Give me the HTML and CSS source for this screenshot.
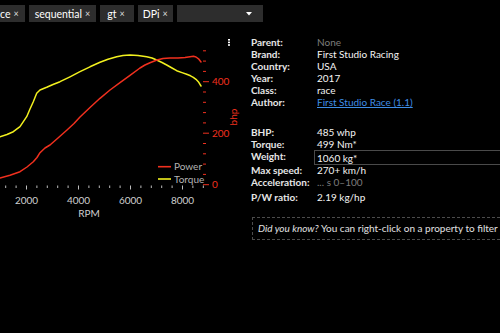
FILE: index.html
```html
<!DOCTYPE html>
<html>
<head>
<meta charset="utf-8">
<link rel="stylesheet" href="styles.css">
</head>
<body>
<div class="tags">
  <span class="tag tag-first">race <i>×</i></span>
  <span class="tag">sequential <i>×</i></span>
  <span class="tag tag-gt">gt <i>×</i></span>
  <span class="tag tag-dpi">DPi <i>×</i></span>
  <span class="select"><svg width="6" height="4" viewBox="0 0 6 4"><path d="M0 0H6L3 3.5Z" fill="#fff"/></svg></span>
</div>
<div class="main">
  <svg class="chart" width="246" height="194" viewBox="0 30 246 194">
    <g class="menu" fill="#fff">
      <rect x="228" y="39" width="2" height="1.6"/>
      <rect x="228" y="41.6" width="2" height="1.6"/>
      <rect x="228" y="44.2" width="2" height="1.6"/>
    </g>
    <g class="yticks" stroke="#f0301e" stroke-width="1">
      <line x1="203" y1="50.8" x2="206" y2="50.8"/>
      <line x1="203" y1="61.1" x2="206" y2="61.1"/>
      <line x1="203" y1="71.4" x2="206" y2="71.4"/>
      <line x1="203" y1="81.7" x2="209" y2="81.7"/>
      <line x1="203" y1="92" x2="206" y2="92"/>
      <line x1="203" y1="102.3" x2="206" y2="102.3"/>
      <line x1="203" y1="112.6" x2="206" y2="112.6"/>
      <line x1="203" y1="122.9" x2="206" y2="122.9"/>
      <line x1="203" y1="133.2" x2="209" y2="133.2"/>
      <line x1="203" y1="143.5" x2="206" y2="143.5"/>
      <line x1="203" y1="153.8" x2="206" y2="153.8"/>
      <line x1="203" y1="164.1" x2="206" y2="164.1"/>
      <line x1="203" y1="174.4" x2="206" y2="174.4"/>
      <line x1="203" y1="184.7" x2="209" y2="184.7"/>
    </g>
    <g class="ylabels">
      <text x="212" y="85.2">400</text>
      <text x="212" y="136.7">200</text>
      <text x="212" y="188.2">0</text>
      <text class="ytitle" x="0" y="0" transform="translate(237 117) rotate(-90)">bhp</text>
    </g>
    <g class="xticks" stroke="#bdbdbd" stroke-width="1">
      <line x1="5.7" y1="185.5" x2="5.7" y2="188"/>
      <line x1="16.1" y1="185.5" x2="16.1" y2="188"/>
      <line x1="26.5" y1="185.5" x2="26.5" y2="189.5"/>
      <line x1="36.9" y1="185.5" x2="36.9" y2="188"/>
      <line x1="47.3" y1="185.5" x2="47.3" y2="188"/>
      <line x1="57.7" y1="185.5" x2="57.7" y2="188"/>
      <line x1="68.1" y1="185.5" x2="68.1" y2="188"/>
      <line x1="78.5" y1="185.5" x2="78.5" y2="189.5"/>
      <line x1="88.9" y1="185.5" x2="88.9" y2="188"/>
      <line x1="99.3" y1="185.5" x2="99.3" y2="188"/>
      <line x1="109.7" y1="185.5" x2="109.7" y2="188"/>
      <line x1="120.1" y1="185.5" x2="120.1" y2="188"/>
      <line x1="130.5" y1="185.5" x2="130.5" y2="189.5"/>
      <line x1="140.9" y1="185.5" x2="140.9" y2="188"/>
      <line x1="151.3" y1="185.5" x2="151.3" y2="188"/>
      <line x1="161.7" y1="185.5" x2="161.7" y2="188"/>
      <line x1="172.1" y1="185.5" x2="172.1" y2="188"/>
      <line x1="182.5" y1="185.5" x2="182.5" y2="189.5"/>
      <line x1="192.9" y1="185.5" x2="192.9" y2="188"/>
      <line x1="203.3" y1="185.5" x2="203.3" y2="188"/>
    </g>
    <g class="xlabels">
      <text x="26.5" y="203.5">2000</text>
      <text x="78.5" y="203.5">4000</text>
      <text x="130.5" y="203.5">6000</text>
      <text x="182.5" y="203.5">8000</text>
      <text x="89" y="216.5">RPM</text>
    </g>
    <polyline class="torque" points="0,136.7 7,134.5 13.3,131.7 20,126.7 26.7,116.7 30,109 33.3,101.7 36.7,93.3 40,90 46.7,87.3 53,84.5 60,81.7 70,76.8 80,71.7 90,66.8 100,62.3 108,59.3 116.7,56.7 123,55.5 130,55 138,55.5 146.7,56.7 152,58 156.7,60 162,62.5 166.7,65 172,68 176.7,70.7 182,72.6 186.7,74.3 190.5,75.8 193.3,77.3 196,79.3 198.3,81.7 201,86"/>
    <polyline class="power" points="0,178 10,175.3 20,171.7 27,167 33.3,161.7 37,157.5 40,152.7 45,148 50,145 58,138 67,130 74,123.5 80,117 90,107.5 100,98.3 110,90 120,82.7 130,75.3 140,68 145,65 150,62.7 157,60 163,58.5 170,58 178,58 185,57.5 190,56.8 193.5,56.3 196,57 198.5,58.8 201,62"/>
    <g class="legend">
      <line x1="158" y1="166.7" x2="171" y2="166.7" stroke="#f0301e" stroke-width="1.6"/>
      <text x="174" y="170.2">Power</text>
      <line x1="158" y1="179" x2="171" y2="179" stroke="#f2f01e" stroke-width="1.6"/>
      <text x="174" y="182.5">Torque</text>
    </g>
  </svg>
  <div class="info">
    <div class="props">
      <span class="k">Parent:</span><span class="v muted">None</span>
      <span class="k">Brand:</span><span class="v">First Studio Racing</span>
      <span class="k">Country:</span><span class="v">USA</span>
      <span class="k">Year:</span><span class="v">2017</span>
      <span class="k">Class:</span><span class="v">race</span>
      <span class="k">Author:</span><span class="v"><a class="link" href="#">First Studio Race (1.1)</a></span>
    </div>
    <div class="props specs">
      <span class="k">BHP:</span><span class="v">485 whp</span>
      <span class="k">Torque:</span><span class="v">499 Nm*</span>
      <span class="k">Weight:</span><span class="v input">1060 kg*</span>
      <span class="k">Max speed:</span><span class="v">270+ km/h</span>
      <span class="k">Acceleration:</span><span class="v muted">... s 0–100</span>
      <span class="k row-last">P/W ratio:</span><span class="v row-last">2.19 kg/hp</span>
    </div>
    <div class="tip"><em>Did you know?</em> You can right-click on a property to filter</div>
  </div>
</div>
</body>
</html>
```

FILE: styles.css
```css
html, body {
  margin: 0;
  padding: 0;
  background: #000;
  width: 500px;
  height: 333px;
  overflow: hidden;
  font-family: "Lato", "Noto Sans", sans-serif;
  color: #f2f2f2;
}

.tags {
  display: flex;
  gap: 4px;
  padding-top: 5px;
  height: 17px;
  margin-left: -15px;
}

.tag {
  display: flex;
  align-items: center;
  height: 17px;
  padding: 0 6px;
  background: #2d2d2d;
  font-size: 10.5px;
  font-weight: normal;
  color: #fff;
  white-space: nowrap;
}

.tag-gt {
  padding: 0 9px 0 7px;
}

.tag-dpi {
  padding: 0 5px 0 5px;
}

.tag i {
  font-style: normal;
  font-weight: normal;
  font-size: 9px;
  color: #ddd;
  margin-left: 3px;
}

.select {
  display: flex;
  align-items: center;
  justify-content: flex-end;
  width: 86px;
  height: 17px;
  box-sizing: border-box;
  padding-right: 11px;
  background: #2d2d2d;
}

.main {
  display: flex;
  align-items: flex-start;
}

.chart {
  flex: none;
  margin-top: 8px;
  display: block;
}

.chart text {
  font-family: "Lato", "Noto Sans", sans-serif;
  font-size: 10px;
}

.ylabels text {
  fill: #f0301e;
}

.xlabels text {
  fill: #cfcfcf;
  text-anchor: middle;
}

.ytitle {
  text-anchor: middle;
}

.legend text {
  fill: #b4b4b4;
}

.power, .torque {
  fill: none;
  stroke-width: 1.5;
  stroke-linejoin: round;
  stroke-linecap: round;
}

.power { stroke: #f0301e; }
.torque { stroke: #f2f01e; }

.info {
  flex: 1;
  min-width: 0;
  margin-left: 5px;
  padding-top: 14px;
  font-size: 10px;
}

.props {
  display: grid;
  grid-template-columns: 66px 1fr;
  grid-auto-rows: 12.1px;
  line-height: 12.1px;
}

.k {
  font-weight: bold;
  color: #e6e6e6;
  white-space: nowrap;
}

.v {
  color: #f4f4f4;
  white-space: nowrap;
}

.muted { color: #7d7d7d; }

.link {
  color: #3f8ee6;
  text-decoration: underline;
}

.specs {
  margin-top: 17.5px;
  grid-template-rows: 12px 12px 14px 12px 12.5px 12px;
}

.row-last {
  margin-top: 2.4px;
}

.input {
  margin-left: -3px;
  margin-right: -30px;
  padding-left: 2px;
  border: 1px solid #4a4a4a;
  height: 15px;
  line-height: 14px;
  box-sizing: border-box;
  margin-top: -0.5px;
}

.tip {
  margin-top: 16px;
  margin-left: 1px;
  margin-right: -60px;
  height: 23px;
  box-sizing: border-box;
  border: 1px dashed #4c4c4c;
  padding-left: 5px;
  line-height: 21px;
  font-size: 10px;
  color: #e0e0e0;
  white-space: nowrap;
}
```
